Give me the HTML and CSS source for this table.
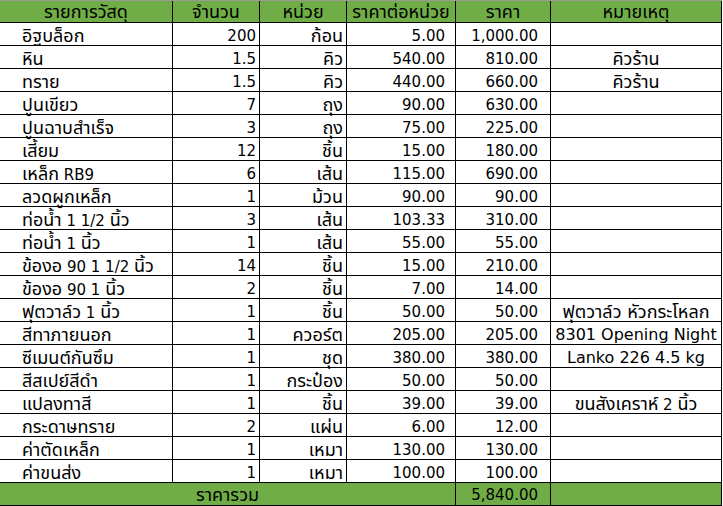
FILE: index.html
```html
<!DOCTYPE html>
<html lang="th">
<head>
<meta charset="utf-8">
<link rel="stylesheet" href="styles.css">
</head>
<body>
<div class="sheet">
  <div class="row head">
    <div class="c"><span class="t">รายการวัสดุ</span></div><div class="c"><span class="t">จำนวน</span></div><div class="c"><span class="t">หน่วย</span></div><div class="c"><span class="t">ราคาต่อหน่วย</span></div><div class="c"><span class="t">ราคา</span></div><div class="c"><span class="t">หมายเหตุ</span></div>
  </div>
  <div class="row"><div class="l"><span class="t">อิฐบล็อก</span></div><div class="r">200</div><div class="r"><span class="t">ก้อน</span></div><div class="r">5.00</div><div class="r">1,000.00</div><div class="c"></div></div>
  <div class="row"><div class="l"><span class="t">หิน</span></div><div class="r">1.5</div><div class="r"><span class="t">คิว</span></div><div class="r">540.00</div><div class="r">810.00</div><div class="c"><span class="t">คิวร้าน</span></div></div>
  <div class="row"><div class="l"><span class="t">ทราย</span></div><div class="r">1.5</div><div class="r"><span class="t">คิว</span></div><div class="r">440.00</div><div class="r">660.00</div><div class="c"><span class="t">คิวร้าน</span></div></div>
  <div class="row"><div class="l"><span class="t">ปูนเขียว</span></div><div class="r">7</div><div class="r"><span class="t">ถุง</span></div><div class="r">90.00</div><div class="r">630.00</div><div class="c"></div></div>
  <div class="row"><div class="l"><span class="t">ปูนฉาบสำเร็จ</span></div><div class="r">3</div><div class="r"><span class="t">ถุง</span></div><div class="r">75.00</div><div class="r">225.00</div><div class="c"></div></div>
  <div class="row"><div class="l"><span class="t">เสี้ยม</span></div><div class="r">12</div><div class="r"><span class="t">ชิ้น</span></div><div class="r">15.00</div><div class="r">180.00</div><div class="c"></div></div>
  <div class="row"><div class="l"><span class="t">เหล็ก</span> RB9</div><div class="r">6</div><div class="r"><span class="t">เส้น</span></div><div class="r">115.00</div><div class="r">690.00</div><div class="c"></div></div>
  <div class="row"><div class="l"><span class="t">ลวดผูกเหล็ก</span></div><div class="r">1</div><div class="r"><span class="t">ม้วน</span></div><div class="r">90.00</div><div class="r">90.00</div><div class="c"></div></div>
  <div class="row"><div class="l"><span class="t">ท่อน้ำ</span> 1 1/2 <span class="t">นิ้ว</span></div><div class="r">3</div><div class="r"><span class="t">เส้น</span></div><div class="r">103.33</div><div class="r">310.00</div><div class="c"></div></div>
  <div class="row"><div class="l"><span class="t">ท่อน้ำ</span> 1 <span class="t">นิ้ว</span></div><div class="r">1</div><div class="r"><span class="t">เส้น</span></div><div class="r">55.00</div><div class="r">55.00</div><div class="c"></div></div>
  <div class="row"><div class="l"><span class="t">ข้องอ</span> 90 1 1/2 <span class="t">นิ้ว</span></div><div class="r">14</div><div class="r"><span class="t">ชิ้น</span></div><div class="r">15.00</div><div class="r">210.00</div><div class="c"></div></div>
  <div class="row"><div class="l"><span class="t">ข้องอ</span> 90 1 <span class="t">นิ้ว</span></div><div class="r">2</div><div class="r"><span class="t">ชิ้น</span></div><div class="r">7.00</div><div class="r">14.00</div><div class="c"></div></div>
  <div class="row"><div class="l"><span class="t">ฟุตวาล์ว</span> 1 <span class="t">นิ้ว</span></div><div class="r">1</div><div class="r"><span class="t">ชิ้น</span></div><div class="r">50.00</div><div class="r">50.00</div><div class="c"><span class="t">ฟุตวาล์ว หัวกระโหลก</span></div></div>
  <div class="row"><div class="l"><span class="t">สีทาภายนอก</span></div><div class="r">1</div><div class="r"><span class="t">ควอร์ต</span></div><div class="r">205.00</div><div class="r">205.00</div><div class="c note">8301 Opening Night</div></div>
  <div class="row"><div class="l"><span class="t">ซีเมนต์กันซึม</span></div><div class="r">1</div><div class="r"><span class="t">ชุด</span></div><div class="r">380.00</div><div class="r">380.00</div><div class="c note">Lanko 226 4.5 kg</div></div>
  <div class="row"><div class="l"><span class="t">สีสเปย์สีดำ</span></div><div class="r">1</div><div class="r"><span class="t">กระป๋อง</span></div><div class="r">50.00</div><div class="r">50.00</div><div class="c"></div></div>
  <div class="row"><div class="l"><span class="t">แปลงทาสี</span></div><div class="r">1</div><div class="r"><span class="t">ชิ้น</span></div><div class="r">39.00</div><div class="r">39.00</div><div class="c"><span class="t">ขนสังเคราห์</span> 2 <span class="t">นิ้ว</span></div></div>
  <div class="row"><div class="l"><span class="t">กระดาษทราย</span></div><div class="r">2</div><div class="r"><span class="t">แผ่น</span></div><div class="r">6.00</div><div class="r">12.00</div><div class="c"></div></div>
  <div class="row"><div class="l"><span class="t">ค่าตัดเหล็ก</span></div><div class="r">1</div><div class="r"><span class="t">เหมา</span></div><div class="r">130.00</div><div class="r">130.00</div><div class="c"></div></div>
  <div class="row"><div class="l"><span class="t">ค่าขนส่ง</span></div><div class="r">1</div><div class="r"><span class="t">เหมา</span></div><div class="r">100.00</div><div class="r">100.00</div><div class="c"></div></div>
  <div class="row foot">
    <div class="c span4"><span class="t">ราคารวม</span></div><div class="r total">5,840.00</div><div class="c"></div>
  </div>
</div>
</body>
</html>
```

FILE: styles.css
```css
html, body {
  margin: 0;
  padding: 0;
  background: #ffffff;
}
body {
  font-family: "DejaVu Sans", "Noto Sans Thai", "Noto Sans", sans-serif;
  font-size: 15px;
  color: #000;
}
.sheet {
  width: 722px;
  border-top: 1px solid #9a9a9a;
}
.row {
  display: grid;
  grid-template-columns: 173px 87px 87px 109px 95px 171px;
  height: 23px;
}
.row > div {
  box-sizing: border-box;
  height: 23px;
  border-right: 1px solid #000;
  border-bottom: 1px solid #000;
  padding-top: 2px;
  line-height: 22px;
  white-space: nowrap;
}
.t {
  font-size: 18px;
}
.note {
  font-size: 16px;
}
.head, .foot {
  background: #70ad47;
}
.head {
  height: 22px;
}
.head > div {
  height: 22px;
  padding-top: 0;
  line-height: 22px;
}
.foot > div {
  padding-top: 1px;
}
.l { padding-left: 22px; text-align: left; }
.r { padding-right: 3px; text-align: right; }
.c { text-align: center; }
.row > .r:nth-child(4) { padding-right: 10px; }
.row > .r:nth-child(5), .row > .total { padding-right: 12px; }
.span4 { grid-column: span 4; }
```
